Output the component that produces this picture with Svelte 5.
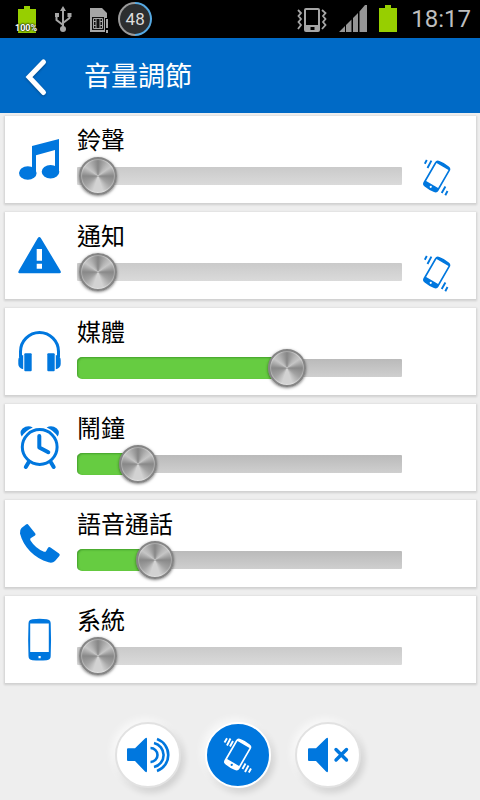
<script lang="ts">
	type Channel = {
		id: string;
		label: string;
		level: number;
		max: number;
		vibrate?: boolean;
	};

	let channels = $state<Channel[]>([
		{ id: 'ring', label: '鈴聲', level: 0, max: 7, vibrate: true },
		{ id: 'notice', label: '通知', level: 0, max: 7, vibrate: true },
		{ id: 'media', label: '媒體', level: 10, max: 15 },
		{ id: 'alarm', label: '鬧鐘', level: 1, max: 7 },
		{ id: 'call', label: '語音通話', level: 1, max: 5 },
		{ id: 'system', label: '系統', level: 0, max: 7 }
	]);

	const modes = [
		{ id: 'sound', label: '響鈴' },
		{ id: 'vibrate', label: '震動' },
		{ id: 'mute', label: '靜音' }
	];

	let mode = $state('vibrate');
</script>

{#snippet shakingPhone(dense: boolean)}
	<svg class="shaking" viewBox="0 0 36 40" fill="none" stroke="currentColor" stroke-width="1.9" aria-hidden="true">
		<path
			transform="translate(17.7 19.5) rotate(30)"
			fill="currentColor"
			stroke="none"
			fill-rule="evenodd"
			d="M-5.4-14.8Q0-15.8 5.4-14.8Q8.6-14.4 8.6-11.2V11.400Q8.6 14.4 5.4 14.800Q0 15.8-5.400 14.800Q-8.600 14.4-8.600 11.400V-11.2Q-8.600-14.4-5.400-14.800ZM-6.900-11.600V9.200H6.900V-11.600ZM0 10.800A1.100 1.100 0 0 0 0 13A1.100 1.100 0 0 0 0 10.800Z"
		/>
		{#if dense}
			<path d="M4.500 7.500L7 3.200M7 10.500L10.500 3.500M10 11.500L13 6M22.500 34L25.500 28.500M25 37L28.500 30.500M28.800 37.500L31 33.500" />
		{:else}
			<path d="M5.800 6.800L7.800 3M8.500 11L12.400 3.600M22.700 36L26.400 29.500M26.300 38.200L28.500 34" />
		{/if}
	</svg>
{/snippet}

{#snippet channelIcon(id: string)}
	<svg class="icon" viewBox="0 0 44 44" fill="currentColor" aria-hidden="true">
		{#if id === 'ring'}
			<path d="M14 35V8L41 1V34H37V12L18 17.300V35Z" />
			<ellipse cx="9.800" cy="35" rx="8.800" ry="6.800" />
			<ellipse cx="32.500" cy="33.700" rx="8.800" ry="6.800" />
		{:else if id === 'notice'}
			<path
				fill-rule="evenodd"
				d="M19.800 4Q21.300 2 22.800 4L42.600 37Q43.500 39.300 41.500 39.300H1.500Q-.300 39.300.600 37ZM18.700 15V26.700H24V15ZM18.700 29.700V34.700H24V29.700Z"
			/>
		{:else if id === 'media'}
			<path d="M2.500 27V21.500A19 19 0 0 1 40.500 21.500V27" fill="none" stroke="currentColor" stroke-width="3" />
			<path d="M5.200 25V39.300Q.300 38 .300 34V30Q.300 26 5.200 25ZM37.800 25V39.300Q42.700 38 42.700 34V30Q42.700 26 37.800 25Z" />
			<rect x="6.300" y="23.300" width="7.400" height="18" rx="1" />
			<rect x="29.300" y="23.300" width="7.400" height="18" rx="1" />
		{:else if id === 'alarm'}
			<path d="M3.700 10.500Q1 6 4.500 2.500Q9.500 -1.500 14.800 1.400Q7.500 4.500 3.700 10.500ZM39.700 10.500Q42.400 6 38.900 2.500Q33.900 -1.500 28.600 1.400Q35.900 4.500 39.700 10.500Z" />
			<g fill="none" stroke="currentColor" stroke-linecap="round" stroke-linejoin="round">
				<circle cx="21.700" cy="21" r="17.400" stroke-width="3" />
				<path stroke-width="4" d="M21.300 10V21.500L30.300 26.200M10.500 36.500L7.800 41M33 36.500L35.700 41" />
			</g>
		{:else if id === 'call'}
			<path d="M3.500 6L8 2.500Q9.500 1.500 10.500 3L17.300 11.500Q18 12.700 17 13.600L12.600 16.300Q11.800 17.200 12.500 18.500Q17.500 26.500 26 29.700Q27.400 30.200 28.200 29L30 25.800Q31 24.500 32.500 25.400L41 31.500Q42.500 32.700 41.300 34L37 39Q34.500 41.500 30.500 40.300C16.500 36.500 5.500 25 2 11.500Q1.500 8 3.500 6Z" />
		{:else}
			<path
				fill-rule="evenodd"
				d="M14.500 1.200Q21.600.200 28.700 1.200Q32.700 1.500 32.700 5.500Q33.400 22 32.700 38Q32.700 41.800 28.700 42.200Q21.600 43 14.500 42.200Q10.500 41.800 10.500 38Q9.800 22 10.500 5.500Q10.500 1.500 14.500 1.200ZM12.200 5.500V34H30.800V5.500ZM20.500 38V40.200H22.700V38Z"
			/>
		{/if}
	</svg>
{/snippet}

{#snippet modeIcon(id: string)}
	{#if id === 'vibrate'}
		{@render shakingPhone(true)}
	{:else}
		<svg class="mode-icon" viewBox="0 0 48 48" fill="none" stroke="currentColor" aria-hidden="true">
			{#if id === 'sound'}
				<path fill="currentColor" stroke="none" d="M4 17.300H11L21 7.500Q23 6 23 8V40Q23 42 21 40.500L11 30H4Q3 30 3 29V18.300Q3 17.300 4 17.300Z" />
				<path stroke-width="2.600" d="M26.500 17A7 7 0 0 1 26.500 31M30 12A12.300 12.300 0 0 1 30 36M33 8A17 17 0 0 1 33 40" />
			{:else}
				<path fill="currentColor" stroke="none" d="M5 17.300H12L22 7.500Q24 6 24 8V40Q24 42 22 40.500L12 30H5Q4 30 4 29V18.300Q4 17.300 5 17.300Z" />
				<path stroke-width="3.400" stroke-linecap="round" d="M32 18.500L42.500 29M42.500 18.500L32 29" />
			{/if}
		</svg>
	{/if}
{/snippet}

<div class="app">
	<div class="status">
		<div class="status-group">
			<div class="charge">
				<svg width="22" height="28" viewBox="0 0 22 28" aria-hidden="true">
					<path fill="#97cf00" d="M9 1H15V4H21V28H3V4H9Z" />
				</svg>
				<span>100%</span>
			</div>
			<svg width="28" height="28" viewBox="0 0 28 28" fill="none" stroke="#a6a6a6" stroke-width="2" aria-hidden="true">
				<path d="M16 4V24M16 20L9.500 15V10M16 18L22.500 13V9" />
				<path fill="#a6a6a6" stroke="none" d="M16 1L19 6H13ZM8 8H12V12H8ZM20.500 8H24.500V12H20.500Z" />
				<circle cx="16" cy="24" r="3" fill="#a6a6a6" stroke="none" />
			</svg>
			<svg width="23" height="28" viewBox="0 0 23 28" aria-hidden="true">
				<path fill="#a6a6a6" d="M5 3H17L22 8V13H20V27H5Z" />
				<rect x="7" y="12" width="12" height="13" fill="#111" />
				<path d="M8.500 13.500H17.500V23.500H8.500ZM11 13V24M15 13V24M8 16.500H11M8 20.500H11M15 16.500H18M15 20.500H18" fill="none" stroke="#a6a6a6" />
				<path fill="#a6a6a6" d="M21 14H23V23H21ZM21 25H23V28H21Z" />
			</svg>
			<span class="badge"><span>48</span></span>
		</div>
		<div class="status-group">
			<svg width="30" height="28" viewBox="0 0 30 28" fill="none" stroke="#a6a6a6" aria-hidden="true">
				<rect x="8" y="4" width="14" height="22" rx="1" stroke-width="2" />
				<path fill="#a6a6a6" stroke="none" fill-rule="evenodd" d="M8 20H22V26H8ZM13.500 22V25H17.500V22Z" />
				<path stroke-width="1.800" d="M1 5L4 8L1.500 11L4 14L1.500 17L4 20L1 24M25 5L28.500 8L26 11L28.500 14L26 17L28.500 20L25 24" />
			</svg>
			<svg width="28" height="28" viewBox="0 0 28 28" aria-hidden="true">
				<path fill="#969696" d="M0 27L6 21V27ZM7 20L12.500 14.500V27H7ZM14 13L19 8V27H14ZM20.500 6.500L26 0H28V27H20.500Z" />
			</svg>
			<svg width="20" height="28" viewBox="0 0 20 28" aria-hidden="true">
				<path fill="#97cf00" d="M6 0H12V3H18V27H0V3H6Z" />
			</svg>
			<time>18:17</time>
		</div>
	</div>

	<header>
		<button type="button" class="back" aria-label="返回">
			<svg width="28" height="44" viewBox="0 0 28 44" aria-hidden="true">
				<path d="M20.500 8L6 23L20.500 38.500" fill="none" stroke="#fff" stroke-width="5" stroke-linecap="round" />
			</svg>
		</button>
		<h1>音量調節</h1>
	</header>

	<main>
		{#each channels as channel (channel.id)}
			<section class="card">
				{@render channelIcon(channel.id)}
				<div class="control">
					<label for={channel.id}>{channel.label}</label>
					<div class="slider" class:off={channel.level === 0}>
						<span class="track"></span>
						<span class="fill" style:width="{(channel.level / channel.max) * 100}%"></span>
						<input id={channel.id} type="range" min="0" max={channel.max} bind:value={channel.level} />
					</div>
				</div>
				{#if channel.vibrate}
					<button type="button" class="vibrate" aria-label={`${channel.label}震動`}>
						{@render shakingPhone(false)}
					</button>
				{/if}
			</section>
		{/each}
	</main>

	<nav>
		{#each modes as item (item.id)}
			<button
				type="button"
				class="mode"
				class:active={mode === item.id}
				aria-label={item.label}
				aria-pressed={mode === item.id}
				onclick={() => (mode = item.id)}
			>
				{@render modeIcon(item.id)}
			</button>
		{/each}
	</nav>
</div>

<style>
	:global(body) {
		background: #eee;
	}

	.app {
		color: #000;
		font-family: Roboto, 'Noto Sans CJK TC', sans-serif;
	}

	button {
		padding: 0;
		border: 0;
		background: none;
		color: #0077de;
		cursor: pointer;
	}

	svg {
		display: block;
		flex: none;
	}

	.status {
		display: flex;
		justify-content: space-between;
		height: 38px;
		padding: 0 9px 0 15px;
		background: #000;
	}

	.status-group {
		display: flex;
		align-items: center;
		gap: 12px;
	}

	.status-group:first-child {
		gap: 10px;
	}

	.charge {
		display: grid;
		justify-items: center;
	}

	.charge svg,
	.charge span {
		grid-area: 1 / 1;
	}

	.charge span {
		align-self: end;
		color: #fff;
		font-size: 9px;
		font-weight: 700;
		line-height: 9px;
		text-shadow:
			0 0 2px #000,
			0 0 2px #000;
	}

	.badge {
		display: grid;
		width: 34px;
		height: 34px;
		border-radius: 50%;
		background: conic-gradient(#56a9e2 50%, #9a9a9a 50%);
	}

	.badge span {
		margin: 2px;
		border-radius: 50%;
		background: #2c2e2f;
		color: #ddd;
		font-size: 17px;
		line-height: 30px;
		text-align: center;
	}

	time {
		color: #bebebe;
		font-size: 24px;
		line-height: 38px;
	}

	header {
		display: flex;
		align-items: center;
		gap: 33px;
		height: 75px;
		padding-left: 23px;
		background: #006ac6;
	}

	.back svg {
		filter: drop-shadow(0 1px 1px rgba(0, 0, 0, 0.3));
	}

	h1 {
		margin: 0;
		padding-top: 2px;
		color: #fff;
		font-size: 27px;
		font-weight: 400;
		line-height: 36px;
	}

	main {
		display: grid;
		gap: 9px;
		padding: 3px 4px 0 5px;
	}

	.card {
		display: grid;
		grid-template-columns: 72px 1fr 74px;
		align-items: start;
		min-height: 87px;
		background: #fff;
		box-shadow: 0 1px 2px 1px rgba(0, 0, 0, 0.13);
	}

	.icon {
		width: 44px;
		height: 44px;
		margin: 22px 0 0 13px;
		color: #0077de;
	}

	.control {
		padding-top: 10px;
	}

	label {
		display: block;
		font-size: 24px;
		font-weight: 400;
		line-height: 30px;
	}

	.slider {
		display: grid;
		align-items: center;
		margin-top: 1px;
	}

	.slider > * {
		grid-area: 1 / 1;
	}

	.track {
		height: 18px;
		border-radius: 1px;
		background: linear-gradient(#bababa, #cfcfcf);
	}

	.off .track {
		background: linear-gradient(#cacaca, #dadada);
	}

	.fill {
		height: 22px;
		border-radius: 5px 0 0 5px;
		background: #66cc41;
		box-shadow: inset 1px 1px 2px rgba(0, 80, 0, 0.35);
	}

	input {
		box-sizing: border-box;
		width: 100%;
		height: 38px;
		margin: 0;
		padding: 0 2px;
		appearance: none;
		background: transparent;
		cursor: pointer;
	}

	input::-webkit-slider-thumb {
		box-sizing: border-box;
		width: 38px;
		height: 38px;
		border: 2px solid #858585;
		border-radius: 50%;
		appearance: none;
		background: conic-gradient(
			#868686,
			#b5b5b5 10%,
			#c6c6c6 15%,
			#888 25%,
			#a2a2a2 35%,
			#d2d2d2 45%,
			#d2d2d2 55%,
			#a2a2a2 65%,
			#888 75%,
			#c6c6c6 85%,
			#b5b5b5 90%,
			#868686
		);
		box-shadow:
			inset 0 0 1px 1px rgba(255, 255, 255, 0.3),
			0 1px 3px rgba(0, 0, 0, 0.5);
	}

	.vibrate {
		margin: 41px 0 0 17px;
		justify-self: start;
	}

	.shaking {
		width: 36px;
		height: 40px;
	}

	nav {
		display: flex;
		justify-content: center;
		gap: 24px;
		padding: 39px 4px 12px 0;
	}

	.mode {
		display: grid;
		place-content: center;
		box-sizing: border-box;
		width: 66px;
		height: 66px;
		border: 2px solid #e2e2e2;
		border-radius: 50%;
		background: #fff;
		box-shadow:
			-3px -3px 8px rgba(255, 255, 255, 0.7),
			3px 4px 7px rgba(0, 0, 0, 0.14);
	}

	.mode.active {
		border-color: #fff;
		background: #0077de;
		color: #fff;
	}

	.mode-icon {
		width: 48px;
		height: 48px;
	}
</style>
